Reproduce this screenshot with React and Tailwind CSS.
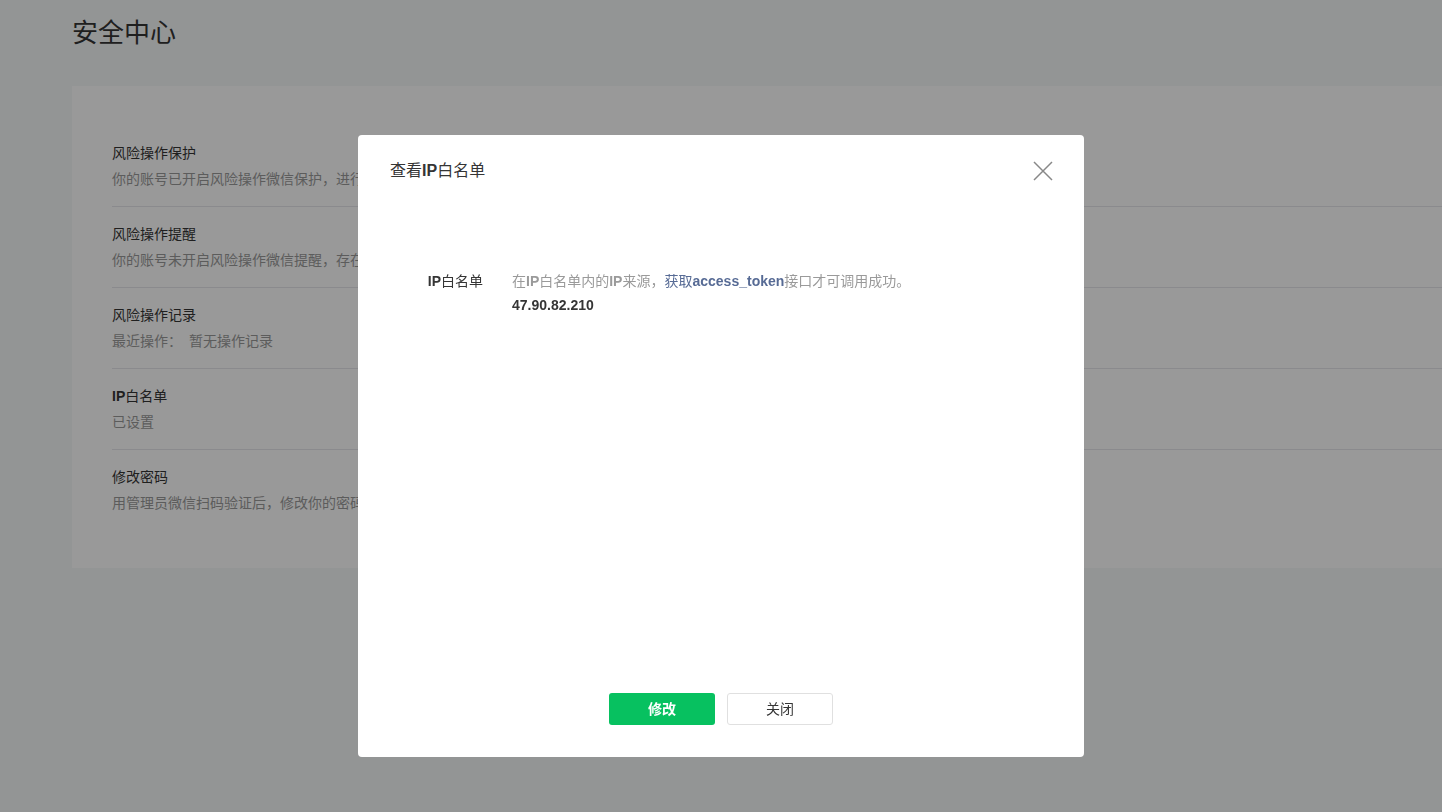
export default function App() {
  const rows = [
    { t: "风险操作保护", d: "你的账号已开启风险操作微信保护，进行风险操作时需要管理员微信扫码验证。" },
    { t: "风险操作提醒", d: "你的账号未开启风险操作微信提醒，存在风险操作时将不会通过微信通知管理员。" },
    { t: "风险操作记录", d: "最近操作：　暂无操作记录" },
    { t: "IP白名单", d: "已设置", bold: true },
    { t: "修改密码", d: "用管理员微信扫码验证后，修改你的密码。" },
  ];
  const font = { fontFamily: '"Liberation Sans", "Noto Sans CJK SC", sans-serif' };
  return (
    <div className="relative w-[1442px] h-[812px] bg-[#f6f8f9] overflow-hidden" style={font}>
      <div className="pl-[72px] pt-[14px]">
        <h1 className="text-[26px] leading-[38px] text-[#353535]">安全中心</h1>
        <div className="mt-[34px] bg-white pt-[40px] pb-[38px] pl-[40px]">
          {rows.map((r, i) => (
            <div key={i} className={`py-[14px] ${i < rows.length - 1 ? "border-b border-[#e7e7eb]" : ""}`}>
              <div className="text-[14px] leading-[26px] text-[#353535]">
                {r.bold ? <><b>IP</b>白名单</> : r.t}
              </div>
              <div className="text-[14px] leading-[26px] text-[#9a9a9a]">{r.d}</div>
            </div>
          ))}
        </div>
      </div>
      <div className="fixed inset-0 bg-black/40 flex items-start justify-center">
        <div className="mt-[135px] w-[726px] h-[622px] bg-white rounded-[4px] flex flex-col">
          <div className="flex items-center justify-between pl-[32px] pr-[30px] pt-[24px] h-[72px] pb-[24px]">
            <span className="text-[16px] text-[#353535]">查看<b>IP</b>白名单</span>
            <svg width="22" height="22" viewBox="0 0 22 22" stroke="#888" strokeWidth="1.5" fill="none">
              <path d="M2 2L20 20M20 2L2 20" />
            </svg>
          </div>
          <div className="flex mt-[62px] flex-1">
            <div className="w-[125px] text-right text-[14px] leading-[24px] text-[#353535]"><b>IP</b>白名单</div>
            <div className="ml-[29px] text-[14px] leading-[24px]">
              <div className="text-[#9a9a9a]">在<b>IP</b>白名单内的<b>IP</b>来源，<span className="text-[#576b95]">获取<b>access_token</b></span>接口才可调用成功。</div>
              <div className="font-bold text-[#353535]">47.90.82.210</div>
            </div>
          </div>
          <div className="flex justify-center gap-[12px] pb-[32px]">
            <button className="w-[106px] h-[32px] rounded-[3px] bg-[#07c160] text-white text-[14px] font-bold">修改</button>
            <button className="w-[106px] h-[32px] rounded-[3px] bg-white border border-[#e0e0e0] text-[#353535] text-[14px]">关闭</button>
          </div>
        </div>
      </div>
    </div>
  );
}
